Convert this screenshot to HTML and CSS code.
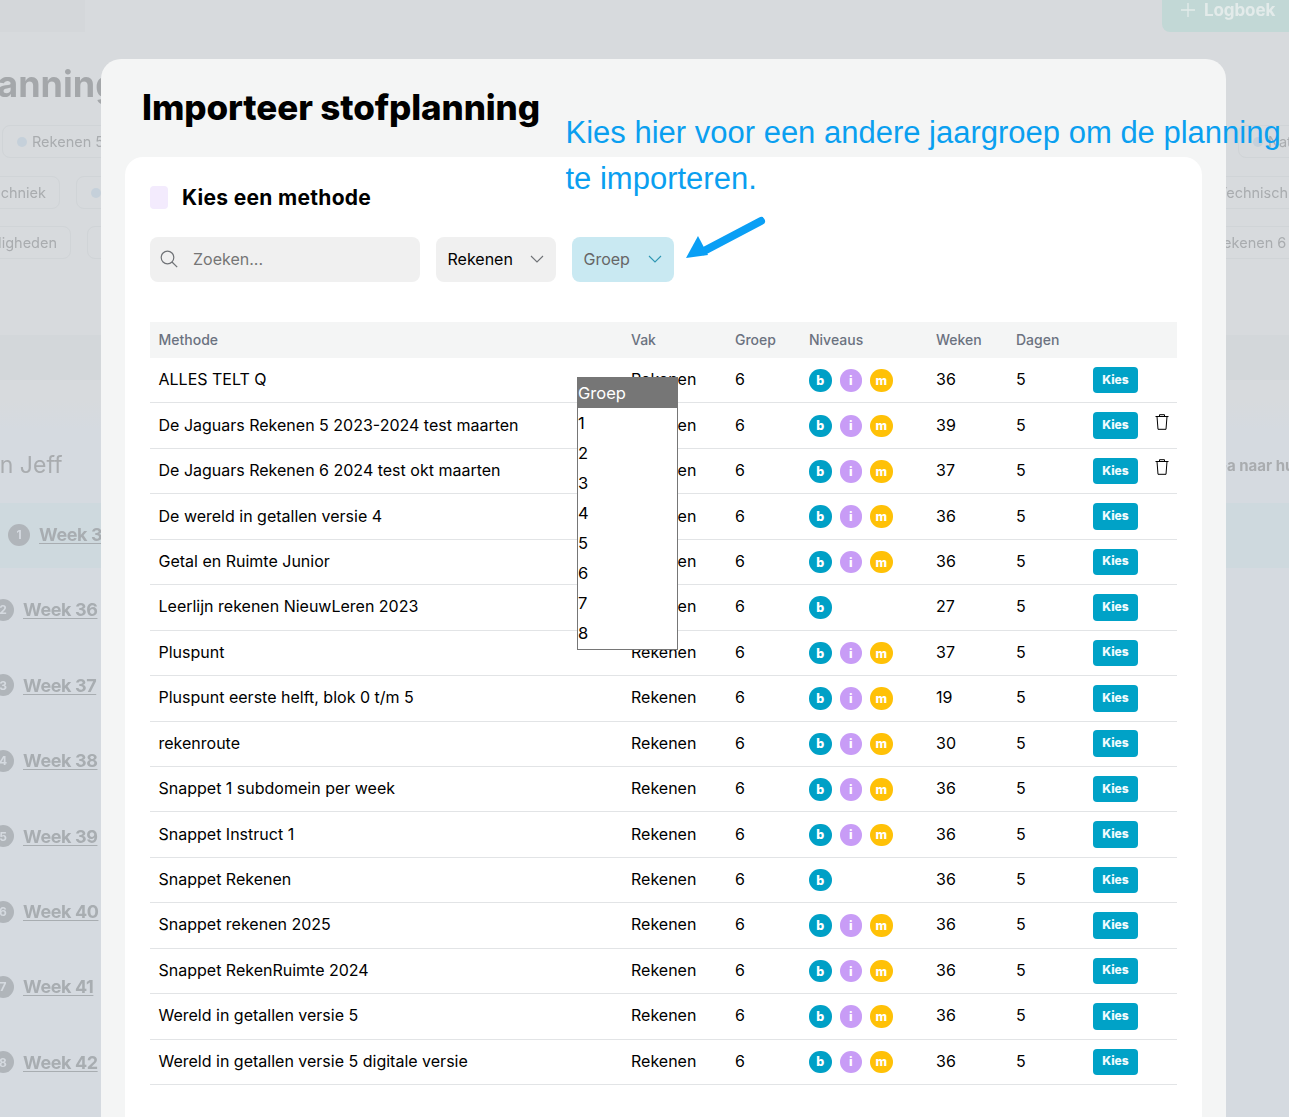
FILE: index.html
```html
<!DOCTYPE html>
<html lang="nl">
<head>
<meta charset="utf-8">
<title>Importeer stofplanning</title>
<link rel="stylesheet" href="styles.css">
</head>
<body>
<div class="backdrop">
  <div class="topbar">
    <div class="top-left"></div>
    <div class="logboek"><svg class="plus" viewBox="0 0 14 14"><path d="M7 0v14M0 7h14"/></svg>Logboek</div>
  </div>
  <div class="page-title">Stofplanning</div>
  <div class="chip-row first">
    <div class="chips-left"><span class="chip"><i class="dot"></i>Rekenen 5</span></div>
    <div class="chips-right r1"><span class="chip"><i class="dot"></i>Natuur</span></div>
  </div>
  <div class="chip-row">
    <div class="chips-left shift"><span class="chip">Spellingtechniek</span><span class="chip"><i class="dot"></i>Taal</span></div>
    <div class="chips-right r2"><span class="chip">Technisch lezen</span></div>
  </div>
  <div class="chip-row last">
    <div class="chips-left shift2"><span class="chip">Vaardigheden</span><span class="chip">Taal</span></div>
    <div class="chips-right r3"><span class="chip">Rekenen 6 blok</span></div>
  </div>
  <div class="band"></div>
  <div class="section-head">
    <span class="section-name">Planning van Jeff</span>
    <span class="section-link">Ga naar huidige week</span>
  </div>
  <div class="weeks">
    <div class="week current"><span class="num">1</span><a class="week-link">Week 35</a></div>
    <div class="week"><span class="num">2</span><a class="week-link">Week 36</a></div>
    <div class="week"><span class="num">3</span><a class="week-link">Week 37</a></div>
    <div class="week"><span class="num">4</span><a class="week-link">Week 38</a></div>
    <div class="week"><span class="num">5</span><a class="week-link">Week 39</a></div>
    <div class="week"><span class="num">6</span><a class="week-link">Week 40</a></div>
    <div class="week"><span class="num">7</span><a class="week-link">Week 41</a></div>
    <div class="week"><span class="num">8</span><a class="week-link">Week 42</a></div>
  </div>
</div>

<div class="modal">
  <h1 class="modal-title">Importeer stofplanning</h1>
  <div class="card">
    <div class="card-head"><span class="head-icon"></span><h2>Kies een methode</h2></div>
    <div class="filters">
      <label class="search">
        <svg class="search-icon" viewBox="0 0 18 18"><circle cx="7.5" cy="7.5" r="6.3"/><path d="M12 12l5.2 5.2"/></svg>
        <input type="text" placeholder="Zoeken...">
      </label>
      <div class="select"><span>Rekenen</span><svg class="chev" viewBox="0 0 14 8"><path d="M1 1l6 6 6-6"/></svg></div>
      <div class="select active"><span>Groep</span><svg class="chev" viewBox="0 0 14 8"><path d="M1 1l6 6 6-6"/></svg></div>
    </div>
    <table class="methods">
      <thead>
        <tr><th class="c-name">Methode</th><th class="c-vak">Vak</th><th class="c-groep">Groep</th><th class="c-niv">Niveaus</th><th class="c-wk">Weken</th><th class="c-dg">Dagen</th><th class="c-act"></th></tr>
      </thead>
      <tbody>
        <tr><td>ALLES TELT Q</td><td>Rekenen</td><td>6</td><td><span class="lv b">b</span><span class="lv i">i</span><span class="lv m">m</span></td><td>36</td><td>5</td><td><button class="kies">Kies</button></td></tr>
        <tr><td>De Jaguars Rekenen 5 2023-2024 test maarten</td><td>Rekenen</td><td>6</td><td><span class="lv b">b</span><span class="lv i">i</span><span class="lv m">m</span></td><td>39</td><td>5</td><td><button class="kies">Kies</button><svg class="trash" viewBox="0 0 14 16"><path d="M.5 2.5h13M4.5 2.5V.7h5v1.8M2 2.5l1 12.8h8l1-12.8"/></svg></td></tr>
        <tr><td>De Jaguars Rekenen 6 2024 test okt maarten</td><td>Rekenen</td><td>6</td><td><span class="lv b">b</span><span class="lv i">i</span><span class="lv m">m</span></td><td>37</td><td>5</td><td><button class="kies">Kies</button><svg class="trash" viewBox="0 0 14 16"><path d="M.5 2.5h13M4.5 2.5V.7h5v1.8M2 2.5l1 12.8h8l1-12.8"/></svg></td></tr>
        <tr><td>De wereld in getallen versie 4</td><td>Rekenen</td><td>6</td><td><span class="lv b">b</span><span class="lv i">i</span><span class="lv m">m</span></td><td>36</td><td>5</td><td><button class="kies">Kies</button></td></tr>
        <tr><td>Getal en Ruimte Junior</td><td>Rekenen</td><td>6</td><td><span class="lv b">b</span><span class="lv i">i</span><span class="lv m">m</span></td><td>36</td><td>5</td><td><button class="kies">Kies</button></td></tr>
        <tr><td>Leerlijn rekenen NieuwLeren 2023</td><td>Rekenen</td><td>6</td><td><span class="lv b">b</span></td><td>27</td><td>5</td><td><button class="kies">Kies</button></td></tr>
        <tr><td>Pluspunt</td><td>Rekenen</td><td>6</td><td><span class="lv b">b</span><span class="lv i">i</span><span class="lv m">m</span></td><td>37</td><td>5</td><td><button class="kies">Kies</button></td></tr>
        <tr><td>Pluspunt eerste helft, blok 0 t/m 5</td><td>Rekenen</td><td>6</td><td><span class="lv b">b</span><span class="lv i">i</span><span class="lv m">m</span></td><td>19</td><td>5</td><td><button class="kies">Kies</button></td></tr>
        <tr><td>rekenroute</td><td>Rekenen</td><td>6</td><td><span class="lv b">b</span><span class="lv i">i</span><span class="lv m">m</span></td><td>30</td><td>5</td><td><button class="kies">Kies</button></td></tr>
        <tr><td>Snappet 1 subdomein per week</td><td>Rekenen</td><td>6</td><td><span class="lv b">b</span><span class="lv i">i</span><span class="lv m">m</span></td><td>36</td><td>5</td><td><button class="kies">Kies</button></td></tr>
        <tr><td>Snappet Instruct 1</td><td>Rekenen</td><td>6</td><td><span class="lv b">b</span><span class="lv i">i</span><span class="lv m">m</span></td><td>36</td><td>5</td><td><button class="kies">Kies</button></td></tr>
        <tr><td>Snappet Rekenen</td><td>Rekenen</td><td>6</td><td><span class="lv b">b</span></td><td>36</td><td>5</td><td><button class="kies">Kies</button></td></tr>
        <tr><td>Snappet rekenen 2025</td><td>Rekenen</td><td>6</td><td><span class="lv b">b</span><span class="lv i">i</span><span class="lv m">m</span></td><td>36</td><td>5</td><td><button class="kies">Kies</button></td></tr>
        <tr><td>Snappet RekenRuimte 2024</td><td>Rekenen</td><td>6</td><td><span class="lv b">b</span><span class="lv i">i</span><span class="lv m">m</span></td><td>36</td><td>5</td><td><button class="kies">Kies</button></td></tr>
        <tr><td>Wereld in getallen versie 5</td><td>Rekenen</td><td>6</td><td><span class="lv b">b</span><span class="lv i">i</span><span class="lv m">m</span></td><td>36</td><td>5</td><td><button class="kies">Kies</button></td></tr>
        <tr><td>Wereld in getallen versie 5 digitale versie</td><td>Rekenen</td><td>6</td><td><span class="lv b">b</span><span class="lv i">i</span><span class="lv m">m</span></td><td>36</td><td>5</td><td><button class="kies">Kies</button></td></tr>
      </tbody>
    </table>
  </div>
</div>

<div class="dropdown">
  <div class="opt selected">Groep</div>
  <div class="opt">1</div>
  <div class="opt">2</div>
  <div class="opt">3</div>
  <div class="opt">4</div>
  <div class="opt">5</div>
  <div class="opt">6</div>
  <div class="opt">7</div>
  <div class="opt">8</div>
</div>

<p class="note">Kies hier voor een andere jaargroep om de planning te importeren.</p>
<svg class="arrow" viewBox="0 0 84 46"><path class="arrow-line" d="M77 5L20 35"/><path class="arrow-head" d="M2 42L14 20 24 39z"/></svg>
</body>
</html>
```

FILE: styles.css
```css
html, body {
  margin: 0;
  height: 1117px;
  overflow: hidden;
}
body {
  background: #d7dadd;
  font-family: "Inter", "Liberation Sans", sans-serif;
  color: #000;
}

/* blurred page behind the modal */
.backdrop {
  height: 1117px;
  overflow: hidden;
  background: linear-gradient(#d7dadd 0, #d7dadd 400px, #d5dae0 430px, #d5dae0 100%);
  filter: blur(0.5px);
}
.topbar {
  display: flex;
  justify-content: space-between;
  height: 32px;
}
.top-left {
  width: 85px;
  background: #d4d7da;
}
.logboek {
  width: 127px;
  box-sizing: border-box;
  padding: 0 0 12px 19px;
  display: flex;
  align-items: center;
  gap: 9px;
  background: #c2d8d6;
  border-radius: 0 0 0 8px;
  color: #e3ebea;
  font-weight: 700;
  font-size: 17px;
  letter-spacing: -0.1px;
}
.plus {
  width: 14px;
  height: 14px;
  fill: none;
  stroke: #e3ebea;
  stroke-width: 1.3;
}
.page-title {
  margin: 28px 0 0 -108px;
  height: 49px;
  line-height: 49px;
  font-size: 36px;
  font-weight: 700;
  color: #a4a7aa;
  white-space: nowrap;
}
.chip-row {
  display: flex;
  justify-content: space-between;
  height: 33px;
  margin-top: 18px;
}
.chip-row.first {
  margin-top: 16px;
}
.chip-row.last {
  margin-top: 17px;
}
.chips-left, .chips-right {
  display: flex;
  gap: 16px;
  font-size: 14.5px;
  color: #a9acaf;
}
.chips-left {
  margin-left: 2px;
}
.chips-left.shift {
  margin-left: -82px;
}
.chips-left.shift2 {
  margin-left: -53px;
}
.chips-right {
  flex: none;
  width: 200px;
}
.chips-right.r1 { margin-right: -149px; }
.chips-right.r2 { margin-right: -114px; }
.chips-right.r3 { margin-right: -110px; }
.chip {
  display: flex;
  align-items: center;
  gap: 5px;
  padding: 0 13px 0 14px;
  border: 1px solid #d0d4d7;
  border-radius: 8px;
  white-space: nowrap;
}
.dot {
  width: 10px;
  height: 10px;
  border-radius: 50%;
  background: #c5d0da;
}
.band {
  height: 45px;
  margin-top: 76px;
  background: #d3d7da;
}
.section-head {
  display: flex;
  justify-content: space-between;
  align-items: center;
  height: 123px;
  box-sizing: border-box;
  padding-top: 47px;
  margin-left: -126px;
  margin-right: -84px;
  white-space: nowrap;
}
.section-name {
  font-size: 23px;
  color: #a9acaf;
}
.section-link {
  font-size: 15px;
  font-weight: 700;
  color: #a9acaf;
}
.weeks {
  display: flex;
  flex-direction: column;
}
.week {
  height: 75.4px;
  display: flex;
  align-items: center;
  gap: 9px;
  margin-left: -8px;
}
.week.current {
  height: 65px;
  box-sizing: border-box;
  margin-left: 0;
  margin-bottom: 4.3px;
  padding: 0 0 2px 8px;
  background: #ced9de;
}
.num {
  width: 22px;
  height: 22px;
  border-radius: 50%;
  background: #b0b5ba;
  color: #d5dae0;
  font-size: 12px;
  font-weight: 700;
  display: flex;
  align-items: center;
  justify-content: center;
}
.week-link {
  font-size: 18px;
  font-weight: 700;
  color: #a8adb1;
  text-decoration: underline;
  text-underline-offset: 2px;
  letter-spacing: -0.4px;
  white-space: nowrap;
}

/* modal */
.modal {
  position: absolute;
  left: 101px;
  top: 59px;
  width: 1125px;
  height: 1100px;
  box-sizing: border-box;
  padding: 24px;
  background: #f4f5f5;
  border-radius: 20px;
}
.modal-title {
  margin: 0 0 25px 17px;
  height: 49px;
  line-height: 49px;
  font-size: 35px;
  font-weight: 800;
  letter-spacing: -0.1px;
}
.card {
  height: 1000px;
  box-sizing: border-box;
  padding: 29px 25px 0;
  background: #fff;
  border-radius: 18px;
}
.card-head {
  display: flex;
  align-items: center;
  gap: 14px;
  height: 23px;
}
.card-head h2 {
  margin: 0;
  font-size: 21px;
  font-weight: 700;
  letter-spacing: 0.3px;
}
.head-icon {
  width: 18px;
  height: 23px;
  border-radius: 4px;
  background: #f3ebfd;
}
.filters {
  display: flex;
  gap: 16px;
  margin-top: 28px;
  height: 45px;
}
.search {
  width: 270px;
  box-sizing: border-box;
  padding-left: 10px;
  display: flex;
  align-items: center;
  gap: 15px;
  background: #f0f0f0;
  border-radius: 8px;
}
.search-icon {
  width: 18px;
  height: 18px;
  fill: none;
  stroke: #6f7276;
  stroke-width: 1.2;
  flex: none;
  margin-top: -2px;
}
.search input {
  flex: 1;
  min-width: 0;
  border: 0;
  padding: 0 0 2px;
  background: transparent;
  font: inherit;
  font-size: 16px;
}
.search input::placeholder {
  color: #757575;
}
.select {
  width: 120px;
  box-sizing: border-box;
  padding: 0 12px 0 11.5px;
  display: flex;
  align-items: center;
  justify-content: space-between;
  background: #f0f0f0;
  border-radius: 8px;
  font-size: 16px;
}
.select span {
  padding-bottom: 2px;
}
.select.active {
  width: 102px;
  background: #c9e9f2;
  color: #666;
}
.chev {
  width: 14px;
  height: 8px;
  margin-top: -2px;
  fill: none;
  stroke: #6f7276;
  stroke-width: 1.1;
}
.select.active .chev {
  stroke: #2f97b3;
}

/* table */
.methods {
  width: 1027px;
  margin-top: 40px;
  table-layout: fixed;
  border-collapse: separate;
  border-spacing: 0;
  font-size: 16px;
}
.methods th {
  height: 36px;
  box-sizing: border-box;
  padding: 0 0 2px 8.5px;
  background: #f4f5f5;
  color: #6b7280;
  font-size: 14px;
  font-weight: 450;
  text-align: left;
}
.methods td {
  height: 45.45px;
  box-sizing: border-box;
  padding: 0 0 2px 8.5px;
  border-bottom: 1px solid #e2e4e6;
  white-space: nowrap;
}
.methods td:nth-child(4),
.methods td:nth-child(7) {
  padding-bottom: 0;
}
.c-name { width: 472.5px; }
.c-vak { width: 104px; }
.c-groep { width: 74px; }
.c-niv { width: 127px; }
.c-wk { width: 80px; }
.c-dg { width: 77px; }
.c-act { width: 92.5px; }
.lv {
  display: inline-flex;
  align-items: center;
  justify-content: center;
  vertical-align: middle;
  width: 22.5px;
  height: 22.5px;
  margin-right: 8px;
  border-radius: 50%;
  color: #fff;
  font-size: 12.5px;
  font-weight: 800;
}
.lv.b { background: #00a0c6; }
.lv.i { background: #c89cf6; }
.lv.m { background: #ffc107; }
.kies {
  width: 45px;
  height: 26.5px;
  padding: 0 0 2px;
  border: 0;
  border-radius: 4px;
  background: #00a2c7;
  color: #f2fbfd;
  font: inherit;
  font-size: 12px;
  font-weight: 800;
  vertical-align: middle;
}
.trash {
  width: 14px;
  height: 16px;
  margin-left: 17px;
  fill: none;
  stroke: #000;
  stroke-width: 1;
  vertical-align: middle;
  position: relative;
  top: -4px;
}

/* native select list, open over the table */
.dropdown {
  position: absolute;
  left: 577px;
  top: 377px;
  width: 101px;
  height: 273px;
  box-sizing: border-box;
  border: 1px solid #767676;
  background: #fff;
  font-size: 16.5px;
}
.opt {
  height: 30px;
  line-height: 30px;
}
.opt.selected {
  background: #767676;
  color: #fff;
}

/* annotation */
.note {
  position: absolute;
  left: 565.5px;
  top: 110px;
  width: 723px;
  margin: 0;
  font-family: "Liberation Sans", Arial, sans-serif;
  font-size: 31px;
  line-height: 46px;
  color: #0a9ff0;
}
.arrow {
  position: absolute;
  left: 684px;
  top: 216px;
  width: 84px;
  height: 46px;
}
.arrow-line {
  fill: none;
  stroke: #0a9ff5;
  stroke-width: 8;
  stroke-linecap: round;
}
.arrow-head {
  fill: #0a9ff5;
}
```
